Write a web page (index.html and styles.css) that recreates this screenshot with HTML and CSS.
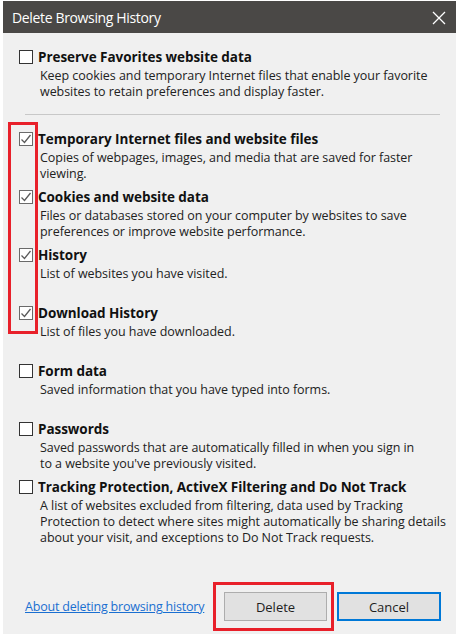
FILE: index.html
```html
<!DOCTYPE html>
<html>
<head>
<meta charset="utf-8">
<link rel="stylesheet" href="styles.css">
</head>
<body>
<div class="dialog">
  <div class="titlebar">
    <span class="title">Delete Browsing History</span>
    <svg class="close" width="14" height="14" viewBox="0 0 14 14"><path d="M1 1 L13 13 M13 1 L1 13" stroke="#ffffff" stroke-width="1.3" fill="none"/></svg>
  </div>
  <div class="content">
    <div class="item first">
      <div class="row"><span class="box"></span><span class="label">Preserve Favorites website data</span></div>
      <div class="desc">Keep cookies and temporary Internet files that enable your favorite<br>websites to retain preferences and display faster.</div>
    </div>
    <div class="sep"></div>
    <div class="items">
      <div class="item">
        <div class="row"><span class="box checked"><svg width="12" height="12" viewBox="0 0 12 12"><path d="M1.5 6.5 L4.5 9.5 L10.5 2" stroke="#5a5a5a" stroke-width="1.3" fill="none"/></svg></span><span class="label">Temporary Internet files and website files</span></div>
        <div class="desc">Copies of webpages, images, and media that are saved for faster<br>viewing.</div>
      </div>
      <div class="item">
        <div class="row"><span class="box checked"><svg width="12" height="12" viewBox="0 0 12 12"><path d="M1.5 6.5 L4.5 9.5 L10.5 2" stroke="#5a5a5a" stroke-width="1.3" fill="none"/></svg></span><span class="label">Cookies and website data</span></div>
        <div class="desc">Files or databases stored on your computer by websites to save<br>preferences or improve website performance.</div>
      </div>
      <div class="item">
        <div class="row"><span class="box checked"><svg width="12" height="12" viewBox="0 0 12 12"><path d="M1.5 6.5 L4.5 9.5 L10.5 2" stroke="#5a5a5a" stroke-width="1.3" fill="none"/></svg></span><span class="label">History</span></div>
        <div class="desc">List of websites you have visited.</div>
      </div>
      <div class="item">
        <div class="row"><span class="box checked"><svg width="12" height="12" viewBox="0 0 12 12"><path d="M1.5 6.5 L4.5 9.5 L10.5 2" stroke="#5a5a5a" stroke-width="1.3" fill="none"/></svg></span><span class="label">Download History</span></div>
        <div class="desc">List of files you have downloaded.</div>
      </div>
      <div class="item">
        <div class="row"><span class="box"></span><span class="label">Form data</span></div>
        <div class="desc">Saved information that you have typed into forms.</div>
      </div>
      <div class="item">
        <div class="row"><span class="box"></span><span class="label">Passwords</span></div>
        <div class="desc">Saved passwords that are automatically filled in when you sign in<br>to a website you've previously visited.</div>
      </div>
      <div class="item">
        <div class="row"><span class="box"></span><span class="label">Tracking Protection, ActiveX Filtering and Do Not Track</span></div>
        <div class="desc">A list of websites excluded from filtering, data used by Tracking<br>Protection to detect where sites might automatically be sharing details<br>about your visit, and exceptions to Do Not Track requests.</div>
      </div>
    </div>
    <div class="footer">
      <a class="link" href="#">About deleting browsing history</a>
      <div class="buttons">
        <button class="btn">Delete</button>
        <button class="btn default">Cancel</button>
      </div>
    </div>
  </div>
  <div class="mark mark-checks"></div>
  <div class="mark mark-delete"></div>
</div>
</body>
</html>
```
FILE: styles.css
```css
html, body {
  margin: 0;
  padding: 0;
  background: #ffffff;
}
body {
  font-family: "Open Sans", "Noto Sans", "Liberation Sans", sans-serif;
  color: #1e1e1e;
}
.dialog {
  position: relative;
  margin: 1px 3px 0 3px;
  width: 453px;
  height: 633px;
  background: #f0f0f0;
  display: flex;
  flex-direction: column;
}
.titlebar {
  height: 32px;
  background: #4a4846;
  display: flex;
  align-items: center;
  justify-content: space-between;
  padding: 0 10px 0 9px;
  flex-shrink: 0;
}
.title {
  color: #ffffff;
  font-size: 14px;
  letter-spacing: -0.35px;
}
.close {
  display: block;
  margin-top: 1px;
}
.content {
  padding: 15px 0 0 16px;
  display: flex;
  flex-direction: column;
  flex: 1;
}
.item {
  height: 58px;
  display: flex;
  flex-direction: column;
}
.item.first {
  height: auto;
}
.row {
  display: flex;
  align-items: center;
  height: 18px;
}
.box {
  width: 12px;
  height: 12px;
  border: 1px solid #333333;
  background: #ffffff;
  margin-right: 5px;
  flex-shrink: 0;
  display: flex;
  align-items: center;
  justify-content: center;
}
.box.checked {
  border-color: #6a6a6a;
}
.box svg {
  display: block;
}
.label {
  font-weight: 700;
  font-size: 13.5px;
  letter-spacing: -0.05px;
  color: #111111;
}
.desc {
  margin-top: 2px;
  padding-left: 21px;
  font-size: 12.5px;
  line-height: 16px;
  letter-spacing: -0.05px;
  color: #222222;
}
.sep {
  margin: 14px 0 15px 6px;
  width: 415px;
  height: 1px;
  background: #c8c8c8;
}
.footer {
  margin-top: auto;
  margin-bottom: 13px;
  display: flex;
  align-items: center;
  justify-content: space-between;
  padding-left: 6px;
  padding-right: 15px;
}
.link {
  color: #1a6fd1;
  font-size: 12.5px;
  letter-spacing: -0.2px;
  text-decoration: underline;
}
.buttons {
  display: flex;
  gap: 10px;
}
.btn {
  width: 103px;
  height: 29px;
  background: #e1e1e1;
  border: 1px solid #adadad;
  font-family: inherit;
  font-size: 13px;
  color: #1e1e1e;
  padding: 0;
}
.btn.default {
  border: 2px solid #0078d7;
  width: 104px;
}
.mark {
  position: absolute;
  border: 3px solid #e8202a;
  box-sizing: border-box;
  pointer-events: none;
}
.mark-checks {
  left: 5px;
  top: 121px;
  width: 30px;
  height: 212px;
}
.mark-delete {
  left: 210px;
  top: 581px;
  width: 121px;
  height: 49px;
}
```
